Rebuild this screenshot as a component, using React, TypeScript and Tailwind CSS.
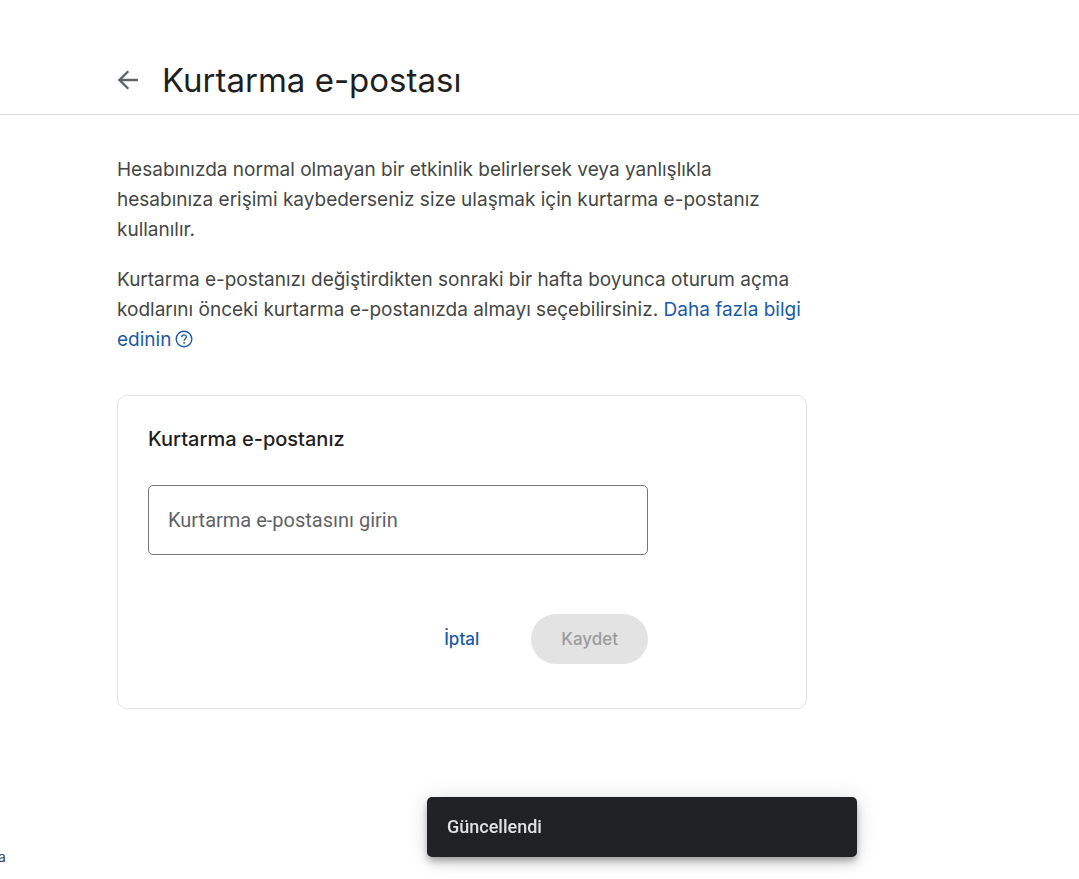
import { useState } from 'react';

function BackIcon() {
    return (
        <svg className="h-5 w-5" viewBox="0 0 20 20" fill="none" stroke="currentColor" strokeWidth="2.3">
            <path d="M20 10H2M10.3 1.2 1.5 10l8.8 8.8" />
        </svg>
    );
}

function HelpIcon() {
    return (
        <svg className="ml-1 inline-block h-[18px] w-[18px] align-[-2px]" viewBox="0 0 18 18" fill="none" aria-hidden="true">
            <circle cx="9" cy="9" r="7.8" stroke="currentColor" strokeWidth="1.4" />
            <path
                d="M6.7 7.2c0-1.4 1-2.3 2.3-2.3s2.3.9 2.3 2.1c0 1.6-2.2 1.9-2.2 3.7"
                stroke="currentColor"
                strokeWidth="1.3"
            />
            <circle cx="9.1" cy="12.9" r="0.9" fill="currentColor" />
        </svg>
    );
}

export default function App() {
    const [email, setEmail] = useState('');

    const handleSubmit = (e: React.FormEvent): void => {
        e.preventDefault();
    };

    return (
        <div className="flex min-h-screen flex-col bg-white font-['Inter',sans-serif] text-[#444746]">
            <header className="flex items-center gap-6 border-b border-[#dadce0] px-[118px] pt-[60px] pb-[14px]">
                <button type="button" aria-label="Geri" className="text-[#5f6368]">
                    <BackIcon />
                </button>
                <h1 className="text-[33px] leading-10 text-[#1f1f1f]">Kurtarma e-postası</h1>
            </header>

            <main className="w-full max-w-[924px] grow px-[117px] pt-10">
                <p className="text-[19px] leading-[30px]">
                    Hesabınızda normal olmayan bir etkinlik belirlersek veya yanlışlıkla hesabınıza
                    erişimi kaybederseniz size ulaşmak için kurtarma e-postanız kullanılır.
                </p>
                <p className="mt-5 text-[19px] leading-[30px]">
                    Kurtarma e-postanızı değiştirdikten sonraki bir hafta boyunca oturum açma kodlarını
                    önceki kurtarma e-postanızda almayı seçebilirsiniz.{' '}
                    <a href="#yardim" className="text-[#1a5aa6]">
                        Daha fazla bilgi edinin
                        <HelpIcon />
                    </a>
                </p>

                <form
                    onSubmit={handleSubmit}
                    className="mt-10 rounded-[10px] border border-[#e1e3e1] px-[30px] pt-7 pb-11"
                >
                    <div className="max-w-[500px]">
                        <label htmlFor="recovery-email" className="block text-xl leading-[30px] font-medium text-[#1f1f1f]">
                            Kurtarma e-postanız
                        </label>
                        <input
                            id="recovery-email"
                            type="email"
                            value={email}
                            onChange={(e) => setEmail(e.target.value)}
                            placeholder="Kurtarma e-postasını girin"
                            className="mt-[31px] h-[70px] w-full rounded-[5px] border border-[#747775] px-[19px] font-['Roboto',sans-serif] text-xl text-[#1f1f1f] placeholder:text-[#5f6368]"
                        />
                        <div className="mt-[59px] flex justify-end gap-[22px]">
                            <button type="button" className="h-[50px] rounded-full px-[30px] pt-0.5 text-[17px] font-medium text-[#1a5aa6]">
                                İptal
                            </button>
                            <button
                                type="submit"
                                disabled={!email.trim()}
                                className="h-[50px] rounded-full bg-[#1a5aa6] px-[30px] pt-0.5 text-[17px] font-medium text-white disabled:bg-[#e3e3e3] disabled:text-[#9c9c9c]"
                            >
                                Kaydet
                            </button>
                        </div>
                    </div>
                </form>
            </main>

            <footer className="pb-3 text-sm leading-5">
                <span className="-ml-0.5">a</span>
            </footer>

            <div
                role="status"
                className="fixed right-[222px] bottom-[22px] flex h-[60px] w-[430px] items-center rounded-[5px] bg-[#202124] px-5 font-['Roboto',sans-serif] text-lg font-medium text-[#dfe1e5] shadow-[0_4px_6px_-1px_rgba(0,0,0,0.25),0_7px_12px_rgba(0,0,0,0.14),0_1px_22px_rgba(0,0,0,0.12)]"
            >
                Güncellendi
            </div>
        </div>
    );
}
